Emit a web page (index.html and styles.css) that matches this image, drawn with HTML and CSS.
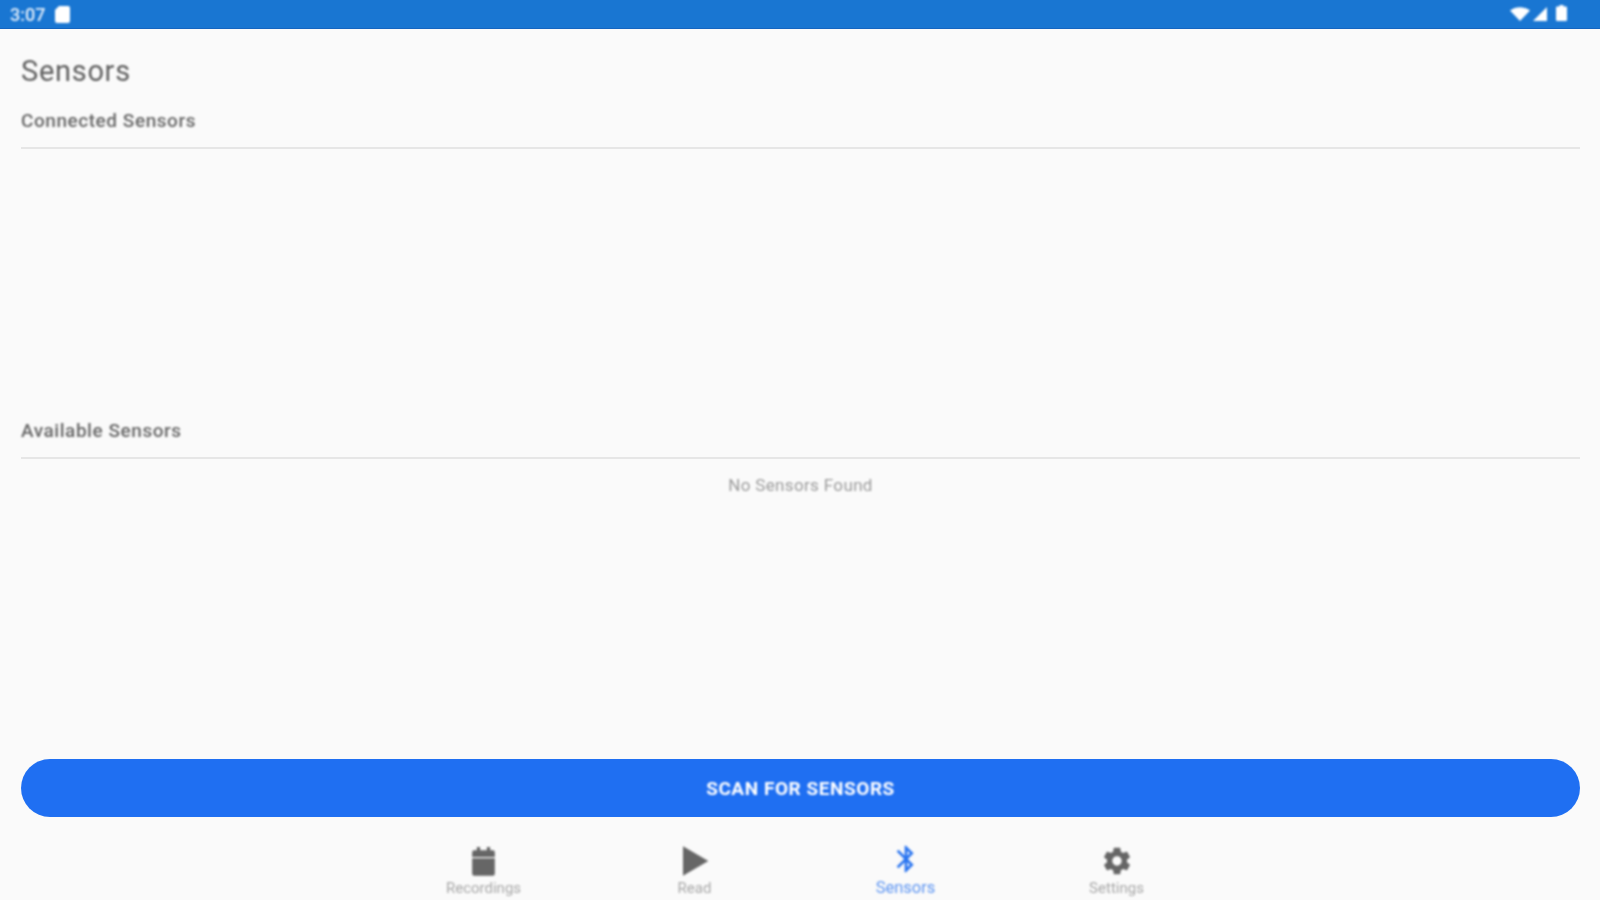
FILE: index.html
```html
<!DOCTYPE html>
<html lang="en">
<head>
<meta charset="utf-8">
<title>Sensors</title>
<link rel="stylesheet" href="styles.css">
</head>
<body>
<div class="app">
  <header class="status">
    <div class="status-left">
      <span class="clock">3:07</span>
      <svg class="sd" viewBox="0 0 16 18"><path d="M5 1h9a2 2 0 0 1 2 2v13a2 2 0 0 1-2 2H3a2 2 0 0 1-2-2V5z"/></svg>
    </div>
    <div class="status-right">
      <svg class="wifi" viewBox="0 0 20 14"><path d="M0 3.500C5.500-1 14.500-1 20 3.500L10 14z"/></svg>
      <svg class="signal" viewBox="0 0 14 14"><path d="M14 0v14H0z"/></svg>
      <svg class="battery" viewBox="0 0 11 16"><path d="M3.500 0h4v1.500H10a1 1 0 0 1 1 1V15a1 1 0 0 1-1 1H1a1 1 0 0 1-1-1V2.500a1 1 0 0 1 1-1h2.500z"/></svg>
    </div>
  </header>
  <main class="content">
    <h1 class="title">Sensors</h1>
    <section class="group group-connected">
      <h2 class="group-title"><span class="soft">Connected Sensors</span></h2>
    </section>
    <section class="group group-available">
      <h2 class="group-title"><span class="soft">Available Sensors</span></h2>
      <p class="empty">No Sensors Found</p>
    </section>
    <button class="scan" type="button"><span class="soft">SCAN FOR SENSORS</span></button>
  </main>
  <nav class="tabs">
    <a class="tab">
      <svg class="tab-icon tab-icon-wide" viewBox="0 0 24 24"><path d="M7 1.500h2.500V4h5V1.500H17V4h2a1.500 1.500 0 0 1 1.500 1.500V9h-17V5.500A1.500 1.500 0 0 1 5 4h2zM3.500 10h17v11.500A1.500 1.500 0 0 1 19 23H5a1.500 1.500 0 0 1-1.500-1.500z"/></svg>
      <span class="tab-label">Recordings</span>
    </a>
    <a class="tab">
      <svg class="tab-icon" viewBox="0 0 24 24"><path d="M3 1l19 11L3 23z"/></svg>
      <span class="tab-label">Read</span>
    </a>
    <a class="tab tab-active">
      <svg class="tab-icon" viewBox="0 0 24 24"><path d="M17.710 7.710 12 2h-1v7.590L6.410 5 5 6.410 10.590 12 5 17.590 6.410 19 11 14.410V22h1l5.710-5.710-4.300-4.290 4.300-4.290zM13 5.830l1.880 1.880L13 9.590V5.830zm1.880 10.460L13 18.170v-3.760l1.880 1.880z"/></svg>
      <span class="tab-label">Sensors</span>
    </a>
    <a class="tab">
      <svg class="tab-icon" viewBox="0 0 24 24"><path d="M19.430 12.980c.04-.32.070-.64.070-.98s-.030-.66-.070-.98l2.110-1.650c.19-.15.240-.42.120-.64l-2-3.460c-.12-.22-.39-.30-.61-.22l-2.490 1c-.52-.40-1.080-.73-1.690-.98l-.38-2.650C14.460 2.180 14.250 2 14 2h-4c-.25 0-.46.18-.49.420l-.38 2.650c-.61.25-1.170.59-1.690.98l-2.490-1c-.23-.09-.49 0-.61.22l-2 3.460c-.13.22-.07.49.12.64l2.110 1.650c-.04.32-.07.65-.07.98s.030.66.070.98l-2.110 1.650c-.19.15-.24.42-.12.64l2 3.460c.12.22.39.30.61.22l2.490-1c.52.40 1.080.73 1.690.98l.38 2.650c.030.24.240.42.490.42h4c.25 0 .46-.18.490-.42l.38-2.650c.61-.25 1.170-.59 1.690-.98l2.490 1c.23.090.49 0 .61-.22l2-3.460c.12-.22.070-.49-.12-.64l-2.110-1.650zM12 15.500c-1.930 0-3.500-1.570-3.500-3.500s1.570-3.500 3.500-3.500 3.500 1.570 3.500 3.500-1.570 3.500-3.500 3.500z"/></svg>
      <span class="tab-label">Settings</span>
    </a>
  </nav>
</div>
</body>
</html>
```
FILE: styles.css
```css
* { box-sizing: border-box; }
html, body { margin: 0; height: 100%; }
body { font-family: Roboto, "Liberation Sans", sans-serif; background: #fafafa; overflow: hidden; }
.app { width: 1600px; height: 900px; display: flex; flex-direction: column; }
.soft { display: inline-block; filter: blur(.8px); }

.status {
  height: 29px; flex: none; background: #1976d2; border-bottom: 1px solid #1565c0;
  display: flex; justify-content: space-between; align-items: center; padding: 0 33px 0 10px;
  color: #fff;
}
.status-left, .status-right { filter: blur(.8px); }
.status-left { display: flex; align-items: center; gap: 9px; }
.clock { font-size: 18px; font-weight: 500; color: #e3eefa; }
.status-right { display: flex; align-items: center; gap: 2px; }
.status svg { fill: #fff; display: block; }
.sd { width: 16px; height: 18px; }
.wifi { width: 20px; height: 14px; }
.signal { width: 16px; height: 14px; margin-right: 6px; }
.battery { width: 11px; height: 16px; margin-bottom: 2px; }

.content { flex: 1; display: flex; flex-direction: column; padding: 0 20px 0 21px; min-height: 0; }
.title { margin: 25px 0 0; height: 35px; font-size: 29px; line-height: 35px; font-weight: 400; letter-spacing: .7px; color: #5f5f5f; filter: blur(.8px); }
.group-title {
  margin: 0; height: 39px; font-size: 19px; line-height: 22px; font-weight: 500; letter-spacing: .55px;
  color: #666; border-bottom: 2px solid #e6e6e6;
}
.group-connected { margin-top: 21px; height: 310px; }
.group-available { flex: 1; }
.empty { margin: 16px 0 0; text-align: center; font-size: 17px; line-height: 20px; letter-spacing: .35px; color: #9b9b9b; filter: blur(.9px); }

.scan {
  flex: none; height: 58px; margin-bottom: 23px; border: 0; border-radius: 29px; background: #1f6ff2;
  color: #fff; font: 700 19px Roboto, "Liberation Sans", sans-serif; letter-spacing: .55px;
}

.tabs { flex: none; height: 60px; display: flex; justify-content: center; }
.tab { width: 211px; display: flex; flex-direction: column; align-items: center; color: #a8a8a8; font-size: 15px; filter: blur(.9px); }
.tab-icon { width: 32px; height: 32px; fill: #666; display: block; margin-top: 5px; flex: none; }
.tab-icon-wide { width: 35px; margin-right: 1px; }
.tab-label { line-height: 18px; margin-top: 2px; }
.tab-active { color: #5d95f2; font-size: 16.500px; }
.tab-active .tab-icon { fill: #2a75f0; margin-top: 3px; margin-bottom: 2px; }
```
